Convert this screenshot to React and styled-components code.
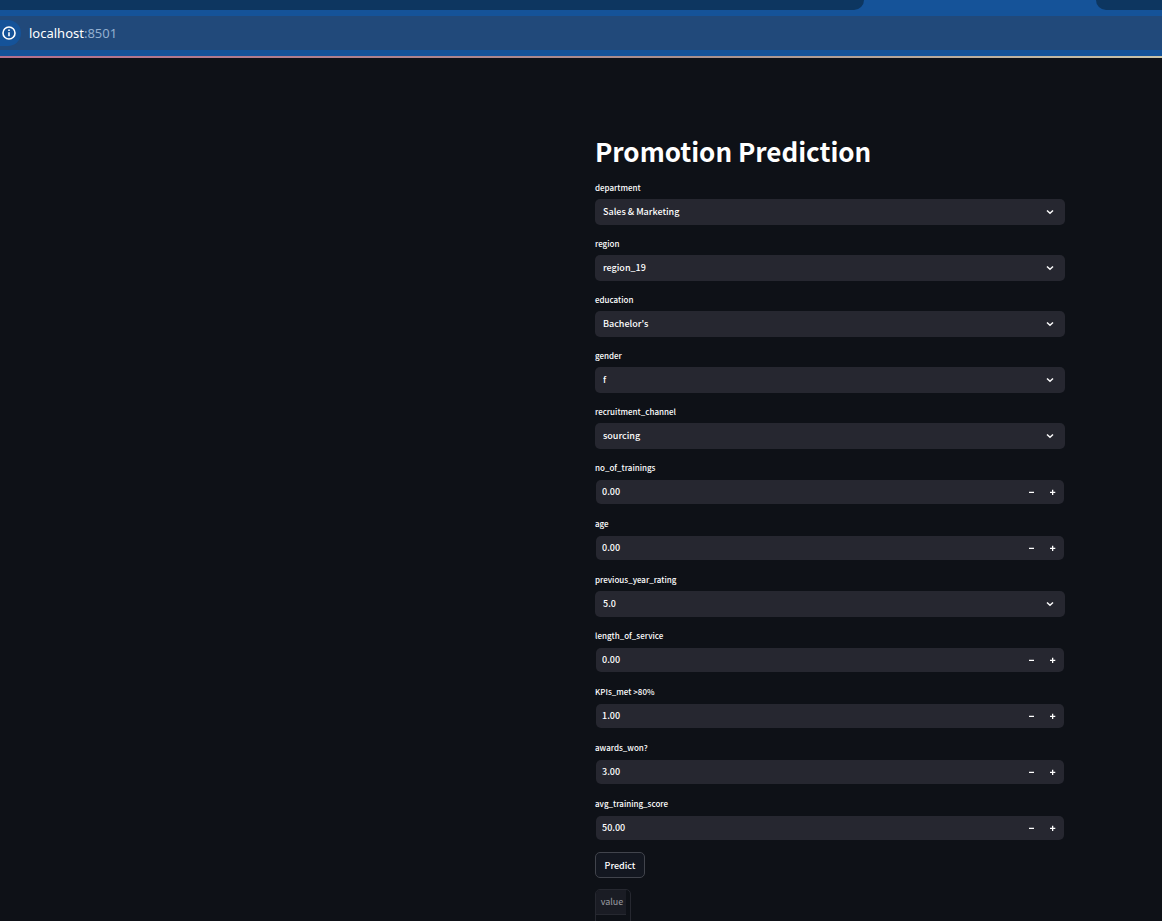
import React from "react";
import styled, { createGlobalStyle } from "styled-components";

const GlobalStyle = createGlobalStyle`
  *, *::before, *::after { box-sizing: border-box; }
  body {
    margin: 0;
    background: #0e1117;
    color: #ffffff;
    font-family: "Noto Sans CJK SC", "Noto Sans", sans-serif;
    font-weight: 500;
  }
  button, input, select { font: inherit; color: inherit; }
`;

const Window = styled.div`
  display: flex;
  flex-direction: column;
  height: 100vh;
`;

const Chrome = styled.header`
  flex: none;
  background: #155399;
`;

const TabStrip = styled.div`
  display: flex;
  justify-content: space-between;
  height: 10px;
`;

const TabEdge = styled.div`
  background: #0d3660;
  ${(p) =>
    p.$side === "left"
      ? "flex: 1; border-bottom-right-radius: 10px; margin-right: 232px;"
      : "width: 66px; border-bottom-left-radius: 10px;"}
`;

const AddressBar = styled.div`
  display: flex;
  align-items: center;
  height: 34px;
  margin: 6px 0;
  background: #21497a;
`;

const SiteInfo = styled.button`
  display: flex;
  align-items: center;
  justify-content: flex-end;
  width: 21px;
  height: 26px;
  padding: 0 5px 0 0;
  border: 0;
  border-radius: 0 13px 13px 0;
  background: #155399;
  color: #ffffff;
`;

const Url = styled.div`
  margin-left: 8px;
  font: 13px/20px "Noto Sans", sans-serif;
  color: #ffffff;
`;

const Port = styled.span`
  color: #93afd0;
`;

const AccentLine = styled.div`
  height: 2px;
  background: linear-gradient(90deg, #b5708c, #a9908c 60%, #c9c3a8);
`;

const Page = styled.main`
  flex: 1;
  min-height: 0;
  overflow: auto;
  scrollbar-width: none;
  padding: 74px 97px 0 24px;
`;

const Form = styled.form`
  display: flex;
  flex-direction: column;
  gap: 11px;
  max-width: 470px;
  margin-left: auto;
`;

const Title = styled.h1`
  margin: 0;
  font-size: 26px;
  line-height: 37px;
  font-weight: 700;
`;

const Field = styled.div`
  display: flex;
  flex-direction: column;
  gap: 4px;
`;

const Label = styled.label`
  font-size: 8px;
  line-height: 15px;
`;

const SelectBox = styled.div`
  display: grid;
  align-items: center;
  height: 26px;
  border-radius: 5px;
  background: #262730;

  > * { grid-area: 1 / 1; }
  > svg { justify-self: end; margin-right: 10px; pointer-events: none; }
`;

const Select = styled.select`
  appearance: none;
  width: 100%;
  height: 26px;
  padding: 0 24px 2px 8px;
  border: 0;
  border-radius: 5px;
  background: transparent;
  font-size: 9px;
`;

const NumberBox = styled.div`
  display: flex;
  height: 24px;
  margin: 1px;
  padding-right: 1px;
  border-radius: 5px;
  overflow: hidden;
  background: #262730;
`;

const NumberInput = styled.input`
  flex: 1;
  min-width: 0;
  padding: 0 6px 2px;
  border: 0;
  background: transparent;
  font-size: 9px;
  appearance: textfield;

  &::-webkit-inner-spin-button { appearance: none; margin: 0; }
`;

const StepButton = styled.button`
  display: flex;
  align-items: center;
  justify-content: center;
  width: 21px;
  padding: 0;
  border: 0;
  background: transparent;
`;

const PredictButton = styled.button`
  align-self: flex-start;
  width: 50px;
  height: 26px;
  padding: 0;
  border: 1px solid #41444c;
  border-radius: 5px;
  background: #131720;
  font-size: 9px;
`;

const ResultFrame = styled.div`
  align-self: flex-start;
  padding-right: 4px;
  border: 1px solid #262830;
  border-radius: 5px;
  overflow: hidden;
`;

const ResultTable = styled.table`
  border-collapse: collapse;
  font-size: 9px;

  th, td { width: 30px; height: 24px; padding: 0 0 0 2px; text-align: center; }
  th {
    background: #1a1c24;
    border-bottom: 1px solid #262830;
    color: #9a9ca2;
    font-weight: 400;
  }
`;

const fields = [
  { name: "department", value: "Sales & Marketing", kind: "select" },
  { name: "region", value: "region_19", kind: "select" },
  { name: "education", value: "Bachelor's", kind: "select" },
  { name: "gender", value: "f", kind: "select" },
  { name: "recruitment_channel", value: "sourcing", kind: "select" },
  { name: "no_of_trainings", value: "0.00" },
  { name: "age", value: "0.00" },
  { name: "previous_year_rating", value: "5.0", kind: "select" },
  { name: "length_of_service", value: "0.00" },
  { name: "KPIs_met >80%", value: "1.00" },
  { name: "awards_won?", value: "3.00" },
  { name: "avg_training_score", value: "50.00" },
];

function SelectField({ id, value }) {
  return (
    <SelectBox>
      <Select id={id} defaultValue={value}>
        <option>{value}</option>
      </Select>
      <svg width="10" height="10" viewBox="0 0 10 10" fill="none" stroke="#fafafa" strokeWidth="1.5" aria-hidden="true">
        <path d="M2 3.5 5 6.3 8 3.5" />
      </svg>
    </SelectBox>
  );
}

function NumberField({ id, value }) {
  return (
    <NumberBox>
      <NumberInput id={id} type="number" step="0.01" defaultValue={value} />
      <StepButton type="button" aria-label="Decrease">
        <svg width="7" height="7" viewBox="0 0 7 7" fill="#ffffff">
          <path d="M1 2.7h5V4H1z" />
        </svg>
      </StepButton>
      <StepButton type="button" aria-label="Increase">
        <svg width="7" height="7" viewBox="0 0 7 7" fill="#ffffff">
          <path d="M1 2.7h2V.7h1.3v2h2V4h-2v2H3V4H1z" />
        </svg>
      </StepButton>
    </NumberBox>
  );
}

export default function App() {
  return (
    <Window>
      <GlobalStyle />
      <Chrome>
        <TabStrip>
          <TabEdge $side="left" />
          <TabEdge $side="right" />
        </TabStrip>
        <AddressBar>
          <SiteInfo aria-label="Site information">
            <svg width="14" height="14" viewBox="0 0 14 14" fill="none" stroke="currentColor" strokeWidth="1.6">
              <circle cx="7" cy="7" r="6" />
              <path d="M7 6.2v4M7 3.6v1.5" />
            </svg>
          </SiteInfo>
          <Url>
            localhost<Port>:8501</Port>
          </Url>
        </AddressBar>
        <AccentLine />
      </Chrome>
      <Page>
        <Form onSubmit={(e) => e.preventDefault()}>
          <Title>Promotion Prediction</Title>
          {fields.map((f, i) => {
            const id = `field-${i}`;
            const Control = f.kind === "select" ? SelectField : NumberField;
            return (
              <Field key={f.name}>
                <Label htmlFor={id}>{f.name}</Label>
                <Control id={id} value={f.value} />
              </Field>
            );
          })}
          <PredictButton type="submit">Predict</PredictButton>
          <ResultFrame>
            <ResultTable>
              <thead>
                <tr>
                  <th scope="col">value</th>
                </tr>
              </thead>
              <tbody>
                <tr>
                  <td />
                </tr>
              </tbody>
            </ResultTable>
          </ResultFrame>
        </Form>
      </Page>
    </Window>
  );
}
